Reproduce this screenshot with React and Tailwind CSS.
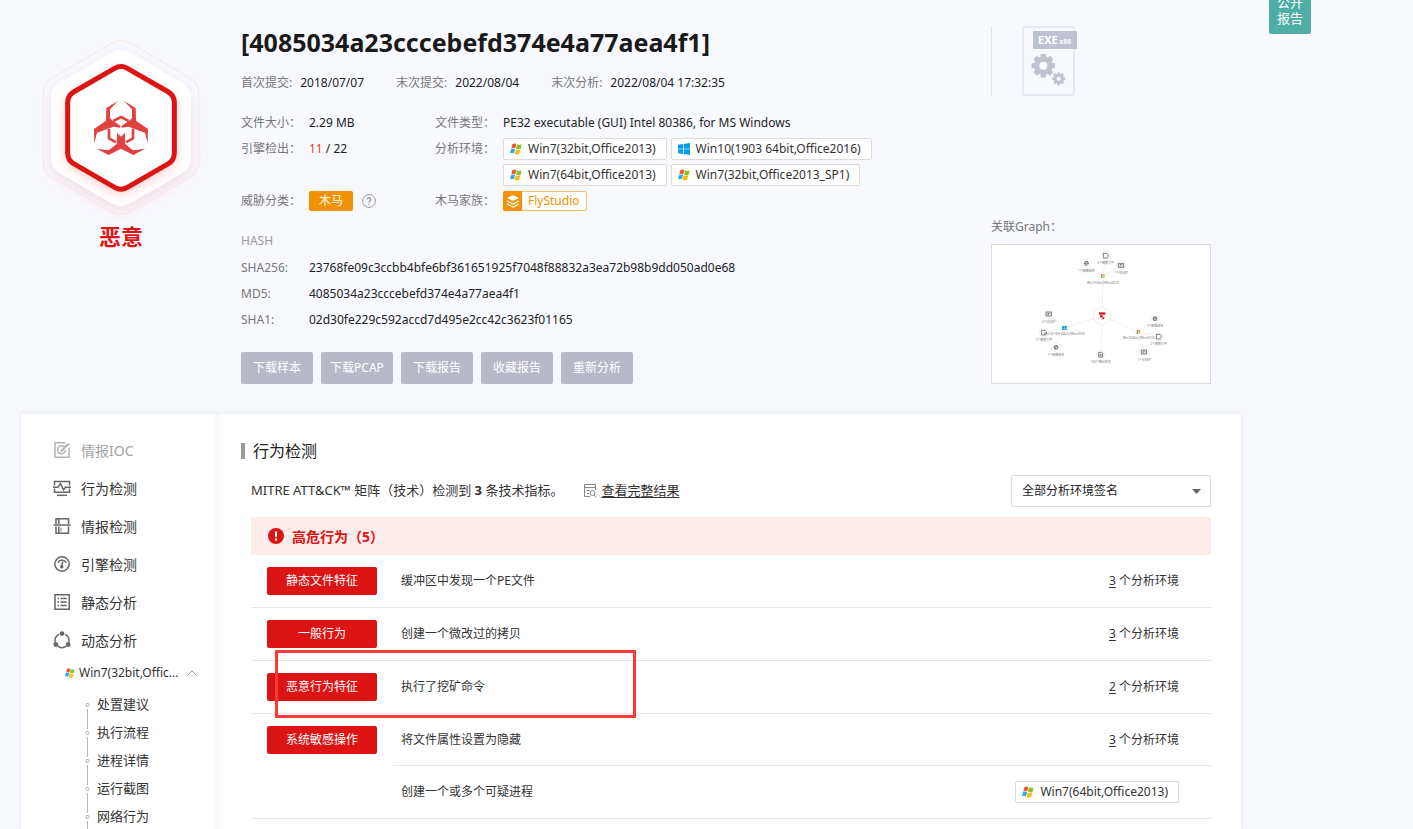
import React from 'react';

function hexPath(cx, top, bottom, half, r) {
  const rise = half * 0.577;
  const pts = [
    [cx, top],
    [cx + half, top + rise],
    [cx + half, bottom - rise],
    [cx, bottom],
    [cx - half, bottom - rise],
    [cx - half, top + rise],
  ];
  const toward = (a, b) => {
    const d = Math.hypot(b[0] - a[0], b[1] - a[1]);
    return [a[0] + ((b[0] - a[0]) * r) / d, a[1] + ((b[1] - a[1]) * r) / d];
  };
  return (
    pts
      .map((p, i) => {
        const before = toward(p, pts[(i + 5) % 6]);
        const after = toward(p, pts[(i + 1) % 6]);
        return `${i ? 'L' : 'M'}${before} Q${p} ${after}`;
      })
      .join(' ') + 'Z'
  );
}

function ThreatShield() {
  return (
    <svg viewBox="-27 0 600 570" className="block h-[190px] w-[200px]" aria-hidden="true">
      <defs>
        <filter id="soft" x="-30%" y="-30%" width="160%" height="160%">
          <feGaussianBlur stdDeviation="16" />
        </filter>
        <filter id="halo" x="-30%" y="-30%" width="160%" height="160%">
          <feGaussianBlur stdDeviation="20" />
        </filter>
        <linearGradient id="shade" x1="0" y1="0" x2="0" y2="1">
          <stop offset="0" stopColor="#e9e8f4" />
          <stop offset="1" stopColor="#f3d3db" />
        </linearGradient>
        <clipPath id="plate">
          <path d={hexPath(273, 52, 536, 210, 30)} />
        </clipPath>
      </defs>
      <path d={hexPath(273, 62, 550, 214, 36)} fill="url(#shade)" filter="url(#halo)" opacity="0.85" />
      <path d={hexPath(273, 24, 562, 233, 32)} fill="none" stroke="#fde3e1" strokeWidth="3" />
      <path d={hexPath(273, 52, 536, 210, 30)} fill="#fff" />
      <g clipPath="url(#plate)">
        <path d={hexPath(273, 112, 498, 166, 30)} fill="#f9b9b6" filter="url(#soft)" opacity="0.75" />
      </g>
      <path d={hexPath(273, 104, 483, 160, 22)} fill="#fff" stroke="#dc1414" strokeWidth="15" />
      <g fill="#e04242">
        <path d="M264 213L229 234L228 272L192 297L193 340L201 308L232 297L250 290L271 293L271 287L248 272L240 264L240 238Z" />
        <path d="M282 213L317 234L318 272L354 297L353 340L345 308L314 297L296 290L275 293L275 287L298 272L306 264L306 238Z" />
        <path d="M200 356L236 375L273 356L310 375L346 356L309 361L285 341L285 308L273 320L261 308L261 341L236 361Z" />
      </g>
      <path
        d="M250 273L273 261L296 273M237 297V325L258 337M309 297V325L288 337"
        fill="none"
        stroke="#e04242"
        strokeWidth="8"
      />
    </svg>
  );
}

function Win7Icon({ className = 'size-3' }) {
  return (
    <svg viewBox="0 0 36 36" className={`shrink-0 ${className}`} aria-hidden="true">
      <path d="M7 4Q12 0 19 3L16 16Q10 13 4 16Z" fill="#f0532d" />
      <path d="M21 4Q28 8 35 4L32 17Q25 20 18 17Z" fill="#8dc21f" />
      <path d="M3 18Q9 15 15 18L12 31Q6 28 0 31Z" fill="#28a9e8" />
      <path d="M17 20Q24 23 31 19L28 32Q21 36 14 33Z" fill="#fdb813" />
    </svg>
  );
}

function Win10Icon({ className = 'size-3' }) {
  return (
    <svg viewBox="0 0 36 36" className={`shrink-0 ${className}`} fill="#0a9fe5" aria-hidden="true">
      <path d="M0 5L15 3V17H0ZM17 2.700L36 0V17H17ZM0 19H15V33L0 31ZM17 19H36V36L17 33.300Z" />
    </svg>
  );
}

function EnvTag({ children, win10 = false }) {
  return (
    <span className="inline-flex h-[22px] items-center gap-[6px] rounded-[2px] border border-[#dcdcdc] bg-white pl-[6px] pr-[10px] text-[12px] text-[#333]">
      {win10 ? <Win10Icon /> : <Win7Icon />}
      {children}
    </span>
  );
}

function gearPath(cx, cy, outer, inner, teeth) {
  const out = [];
  for (let i = 0; i < teeth; i += 1) {
    const a = (i / teeth) * Math.PI * 2 - Math.PI / 2;
    [
      [-0.3, inner],
      [-0.2, outer],
      [0.2, outer],
      [0.3, inner],
    ].forEach(([o, r]) => out.push(`${cx + r * Math.cos(a + o)} ${cy + r * Math.sin(a + o)}`));
  }
  return `M${out.join('L')}Z`;
}

function ExeFile() {
  return (
    <svg viewBox="126 78 165 210" className="h-[70px] w-[55px]" role="img" aria-label="EXE x86">
      <rect x="129" y="81" width="153" height="204" rx="3" fill="#f8f9ff" stroke="#e6e8f1" strokeWidth="6" />
      <rect x="159" y="93" width="132" height="54" rx="3" fill="#bfc3d1" />
      <text x="174" y="132" fontSize="33" fontWeight="700" fill="#fff">
        EXE
      </text>
      <text x="238" y="132" fontSize="21" fontWeight="600" fill="#fff">
        x86
      </text>
      <path d={gearPath(190, 197, 36, 28, 8)} fill="#bfc3d1" />
      <circle cx="190" cy="197" r="12" fill="#f8f9ff" />
      <path d={gearPath(236, 236, 20, 15, 8)} fill="#bfc3d1" />
      <circle cx="236" cy="236" r="6" fill="#f8f9ff" />
    </svg>
  );
}

const graphLeaves = [
  { x: 319, y: 160, to: [369, 199], kind: 'globe', label: '1个网络域名' },
  { x: 377, y: 137, to: [369, 199], kind: 'file', label: '3个释放文件' },
  { x: 423, y: 166, to: [369, 199], kind: 'card', label: '1个访问IP' },
  { x: 206, y: 312, to: [253, 354], kind: 'card', label: '2个访问IP' },
  { x: 192, y: 368, to: [253, 354], kind: 'file', label: '2个释放文件' },
  { x: 228, y: 412, to: [253, 354], kind: 'globe', label: '1个网络域名' },
  { x: 525, y: 326, to: [476, 366], kind: 'globe', label: '1个网络域名' },
  { x: 536, y: 380, to: [476, 366], kind: 'file', label: '2个释放文件' },
  { x: 492, y: 426, to: [476, 366], kind: 'card', label: '1个访问IP' },
  { x: 362, y: 434, to: [366, 318], kind: 'doc', label: '100个相似样本' },
];

function LeafGlyph({ kind }) {
  if (kind === 'globe')
    return (
      <>
        <circle r="7" fill="#5d6570" />
        <path d="M-5 -2H5M-5 3H5M-2 -5L3 5" stroke="#fff" strokeWidth="1.500" />
      </>
    );
  if (kind === 'file')
    return <path d="M-7 -7H4L7 -4V4M3 7H-7V-7M2 5L7 8" fill="none" stroke="#5d6570" strokeWidth="2.500" />;
  if (kind === 'card')
    return <path d="M-8 -6H8V6H-8ZM-4 -2H4M-4 2H1M4 2H5" fill="none" stroke="#5d6570" strokeWidth="2.500" />;
  return <path d="M-6 -7H3L6 -4V7H-6ZM-3 -1H3M-3 3H3" fill="none" stroke="#5d6570" strokeWidth="2.500" />;
}

function RelationGraph() {
  return (
    <svg viewBox="36 105 654 414" className="block h-[138px] w-full" role="img" aria-label="关联关系图">
      <path d="M369 199L366 318L253 354M366 318L476 366" fill="none" stroke="#e8e8ea" strokeWidth="2" />
      {graphLeaves.map((n, i) => (
        <line key={i} x1={n.x} y1={n.y} x2={n.to[0]} y2={n.to[1]} stroke="#e8e8ea" strokeWidth="2" />
      ))}
      {graphLeaves.map((n, i) => (
        <g key={i} transform={`translate(${n.x} ${n.y})`}>
          <circle r="14" fill="#fff" stroke="#ececee" strokeWidth="2" />
          <LeafGlyph kind={n.kind} />
          <text y="26" textAnchor="middle" fontSize="9" fill="#777">
            {n.label}
          </text>
        </g>
      ))}
      {[
        [369, 199, 'Win7(32bit,Office2013)'],
        [476, 366, 'Win7(64bit,Office2013)'],
        [253, 354, 'Win10(1903 64bit,Office2016)'],
      ].map(([x, y, label], i) => (
        <g key={label} transform={`translate(${x} ${y})`}>
          <circle r="12" fill="#fff" stroke="#f1f1f3" strokeWidth="2" />
          {i === 2 ? (
            <path d="M-7 -5L-1 -6V0H-7ZM0 -6L7 -7V0H0ZM-7 1H-1V6L-7 5ZM0 1H7V7L0 6Z" fill="#0a9fe5" />
          ) : (
            <>
              <path d="M-5 -6H0L-1 -1H-6Z" fill="#f0532d" />
              <path d="M1 -5H6L5 0H0Z" fill="#8dc21f" />
              <path d="M-6 0H-1L-2 5H-7Z" fill="#28a9e8" />
              <path d="M0 1H5L4 6H-1Z" fill="#fdb813" />
            </>
          )}
          <text y="22" textAnchor="middle" fontSize="9" fill="#777">
            {label}
          </text>
        </g>
      ))}
      <path d={hexPath(366, 290, 346, 25, 3)} fill="#fff" stroke="#fbd5d3" strokeWidth="2" />
      <path d="M357 307H376V314H357Z" fill="#dc1414" />
      <path d="M357 316H376V330H357Z" fill="#fdeceb" />
      <circle cx="364" cy="319" r="4" fill="#dc1414" />
      <circle cx="370" cy="325" r="3" fill="#dc1414" />
    </svg>
  );
}

function NavIcon({ name }) {
  const shapes = {
    ioc: (
      <>
        <path d="M12 1.800H2V16.300H16V7" />
        <path d="M11 5.500A4 4 0 1 0 12.600 9" />
        <path d="M8 10.500L14.500 3.500" strokeWidth="2.200" />
        <path d="M13 5.500L16.500 2.500" />
      </>
    ),
    behavior: (
      <>
        <path d="M1.500 6.500V2.500H16.500V6.500M1.500 9.500V13.300H16.500V9.500" />
        <path d="M0 8.300H5L7.500 4.500L10.500 10.800L12.500 8.300H18" />
        <path d="M4 16.300H14" />
      </>
    ),
    intel: (
      <>
        <path d="M3 7V1.800H15.500V7M3 9.500V16.300H15.500V9.500M5.800 1.800V7M5.800 9.500V16.300" />
        <path d="M0.500 8H17.500" />
        <path d="M8 10.500V14.500" strokeWidth="0.800" />
      </>
    ),
    engine: (
      <>
        <circle cx="9" cy="9" r="7.200" />
        <path d="M4.800 8A4.500 4.500 0 0 1 13.200 8" strokeWidth="1.200" />
        <path d="M9.700 6.500L8.800 11.500" />
        <circle cx="8.700" cy="11.800" r="1" fill="currentColor" />
      </>
    ),
    static: (
      <>
        <path d="M2 1.800H16.200V16.300H2Z" />
        <path d="M4.500 5.500H6M4.500 9H6M4.500 12.500H6M7.500 5.500H13.700M7.500 9H13.700M7.500 12.500H13.700" />
      </>
    ),
    dynamic: (
      <>
        <path d="M6 3.300A7 7 0 0 0 2.200 11M12 3.300A7 7 0 0 1 15.800 11M4.800 15.200A7 7 0 0 0 13.200 15.200" />
        <circle cx="9" cy="2.600" r="1.700" fill="currentColor" />
        <circle cx="2.800" cy="13.500" r="1.700" fill="currentColor" />
        <circle cx="15.200" cy="13.500" r="1.700" fill="currentColor" />
      </>
    ),
  };
  return (
    <svg viewBox="0 0 18 18" className="size-[18px] shrink-0" fill="none" stroke="currentColor" strokeWidth="1.500" aria-hidden="true">
      {shapes[name]}
    </svg>
  );
}

const navItems = [
  ['ioc', '情报IOC'],
  ['behavior', '行为检测'],
  ['intel', '情报检测'],
  ['engine', '引擎检测'],
  ['static', '静态分析'],
  ['dynamic', '动态分析'],
];

const subItems = ['处置建议', '执行流程', '进程详情', '运行截图', '网络行为', '释放文件'];

function Sidebar() {
  return (
    <nav className="w-[194px] shrink-0 overflow-hidden bg-white pt-[17px]">
      <ul>
        {navItems.map(([icon, label], i) => (
          <li key={label}>
            <a href={`#${icon}`} className={`flex h-[38px] items-center gap-[10px] pl-8 text-[14px] ${i ? 'text-[#333]' : 'text-[#a3a3a3]'}`}>
              <span className={i ? 'text-[#666]' : 'text-[#b3b3b3]'}>
                <NavIcon name={icon} />
              </span>
              {label}
            </a>
          </li>
        ))}
      </ul>
      <button type="button" className="mb-1 flex h-7 items-center gap-1 pl-11 text-[12px] text-[#333]">
        <Win7Icon className="size-[10px]" />
        <span className="w-[104px] text-left">Win7(32bit,Offic...</span>
        <svg viewBox="0 0 10 6" className="h-[6px] w-[10px]" fill="none" stroke="#999" aria-hidden="true">
          <path d="M0.500 5.500L5 1L9.500 5.500" />
        </svg>
      </button>
      <ul>
        {subItems.map((label) => (
          <li key={label} className="flex h-7 pl-16">
            <svg viewBox="0 0 5 28" className="mr-[7px] h-7 w-[5px] shrink-0" fill="none" stroke="#b5b5b5" aria-hidden="true">
              <rect x="1" y="12.500" width="3" height="3" rx="1" />
              <path d="M2.500 0V10" className={label === subItems[0] ? 'hidden' : ''} />
              <path d="M2.500 18V28" />
            </svg>
            <a href={`#${label}`} className="flex items-center text-[13px] text-[#333]">
              {label}
            </a>
          </li>
        ))}
      </ul>
    </nav>
  );
}

const label = 'text-[#777]';

function Summary() {
  return (
    <div className="min-w-0 flex-1 pl-5 pt-[26px] text-[12px] leading-[26px] text-[#222]">
      <h1 className="text-[25px] font-bold leading-8 text-[#1a1a1a]">[4085034a23cccebefd374e4a77aea4f1]</h1>
      <div className="mt-3 flex gap-8">
        {[
          ['首次提交:', '2018/07/07'],
          ['末次提交:', '2022/08/04'],
          ['末次分析:', '2022/08/04 17:32:35'],
        ].map(([k, v]) => (
          <div key={k} className="flex gap-2">
            <span className={label}>{k}</span>
            <span>{v}</span>
          </div>
        ))}
      </div>
      <div className="mt-[14px] grid grid-cols-[68px_126px_68px_1fr]">
        <span className={label}>文件大小：</span>
        <span>2.29 MB</span>
        <span className={label}>文件类型：</span>
        <span>PE32 executable (GUI) Intel 80386, for MS Windows</span>
        <span className={label}>引擎检出：</span>
        <span>
          <span className="text-[#d8471f]">11</span> / 22
        </span>
        <span className={label}>分析环境：</span>
        <div className="flex flex-col items-start">
          <div className="flex h-[26px] items-center gap-1">
            <EnvTag>Win7(32bit,Office2013)</EnvTag>
            <EnvTag win10>Win10(1903 64bit,Office2016)</EnvTag>
          </div>
          <div className="flex h-[26px] items-center gap-1">
            <EnvTag>Win7(64bit,Office2013)</EnvTag>
            <EnvTag>Win7(32bit,Office2013_SP1)</EnvTag>
          </div>
        </div>
        <span className={label}>威胁分类：</span>
        <span className="flex items-center gap-[9px]">
          <span className="flex h-5 w-11 items-center justify-center rounded-[2px] bg-[#f39200] text-white">木马</span>
          <svg viewBox="0 0 14 14" className="size-[14px]" fill="none" stroke="#999" aria-hidden="true">
            <circle cx="7" cy="7" r="6.400" />
            <path d="M5.200 5.600A1.800 1.800 0 1 1 7.700 7.200Q7 7.500 7 8.400M7 9.700V10.900" strokeWidth="1.300" />
          </svg>
        </span>
        <span className={label}>木马家族：</span>
        <span className="flex items-center">
          <span className="flex h-5 items-center rounded-[2px] border border-[#f8c26d] bg-white text-[#f39200]">
            <span className="-my-px -ml-px flex h-5 w-[19px] items-center justify-center rounded-l-[2px] bg-[#f39200]">
              <svg viewBox="0 0 14 14" className="size-[14px]" aria-hidden="true">
                <path d="M7 1L13 4L7 7L1 4Z" fill="#fff" />
                <path d="M1 7L7 10L13 7M1 10L7 13L13 10" fill="none" stroke="#fff" strokeWidth="1.300" />
              </svg>
            </span>
            <span className="px-[6px]">FlyStudio</span>
          </span>
        </span>
      </div>
      <div className="mt-[14px] text-[#999]">HASH</div>
      <dl className="mt-px grid grid-cols-[68px_1fr]">
        <dt className={label}>SHA256:</dt>
        <dd>23768fe09c3ccbb4bfe6bf361651925f7048f88832a3ea72b98b9dd050ad0e68</dd>
        <dt className={label}>MD5:</dt>
        <dd>4085034a23cccebefd374e4a77aea4f1</dd>
        <dt className={label}>SHA1:</dt>
        <dd>02d30fe229c592accd7d495e2cc42c3623f01165</dd>
      </dl>
      <div className="mt-[19px] flex gap-2">
        {['下载样本', '下载PCAP', '下载报告', '收藏报告', '重新分析'].map((t) => (
          <button key={t} type="button" className="h-8 w-[72px] rounded-[2px] bg-[#b8b9c7] text-center text-white">
            {t}
          </button>
        ))}
      </div>
    </div>
  );
}

function TypeBadge({ children }) {
  return <span className="flex h-7 w-[110px] items-center justify-center rounded-[2px] bg-[#dc1414] text-white">{children}</span>;
}

function Count({ n }) {
  return (
    <span>
      <a href="#env" className="underline underline-offset-2">
        {n}
      </a>{' '}
      个分析环境
    </span>
  );
}

const rows = [
  { type: '静态文件特征', text: '缓冲区中发现一个PE文件', n: 3 },
  { type: '一般行为', text: '创建一个微改过的拷贝', n: 3 },
  { type: '恶意行为特征', text: '执行了挖矿命令', n: 2, marked: true },
];

function Detection() {
  return (
    <main className="min-w-0 flex-1 overflow-hidden bg-white pl-5 pr-[30px] pt-[22px]">
      <h2 className="flex h-[30px] items-center gap-2 text-[16px] text-[#222]">
        <span className="h-4 w-1 bg-[#999]" />
        行为检测
      </h2>
      <div className="ml-[10px]">
        <div className="mt-[9px] flex h-8 items-center text-[13px] text-[#333]">
          <p>
            MITRE ATT&amp;CK™ 矩阵（技术）检测到 <b>3</b> 条技术指标。
          </p>
          <svg viewBox="0 0 14 14" className="ml-5 size-[14px]" fill="none" stroke="#888" aria-hidden="true">
            <path d="M12.500 6V0.500H1.500V12.500H7M1.500 3.500H12.500M4 6.500H7M4 9.500H6" />
            <circle cx="9.500" cy="9" r="2.500" />
            <path d="M11.300 11L13 13.200" />
          </svg>
          <a href="#attck" className="ml-1 underline underline-offset-2">
            查看完整结果
          </a>
          <div className="relative ml-auto">
            <select
              aria-label="分析环境签名"
              className="block h-8 w-[200px] appearance-none rounded-[2px] border border-[#dcdcdc] bg-white pl-[10px] pr-6 text-[12px] text-[#222]"
            >
              <option>全部分析环境签名</option>
            </select>
            <svg viewBox="0 0 9 5" className="pointer-events-none absolute right-[10px] top-[14px] h-[5px] w-[9px]" aria-hidden="true">
              <path d="M0 0H9L4.500 5Z" fill="#666" />
            </svg>
          </div>
        </div>
        <h3 className="mt-[10px] flex h-[38px] items-center gap-2 bg-[#fcecea] pl-[17px] text-[14px] font-bold text-[#dc1414]">
          <svg viewBox="0 0 16 16" className="size-4" aria-hidden="true">
            <circle cx="8" cy="8" r="8" fill="#dc1414" />
            <path d="M8 3.500V9M8 10.500V12.500" stroke="#fff" strokeWidth="2" />
          </svg>
          高危行为（5）
        </h3>
        <table className="w-full border-separate border-spacing-0 text-[12px] text-[#333]">
          <tbody>
            {rows.map((r) => (
              <tr key={r.type} className="h-[53px]">
                <td className="relative w-[142px] border-b border-[#e6e6e6] pl-4">
                  <TypeBadge>{r.type}</TypeBadge>
                  {r.marked && (
                    <div className="pointer-events-none absolute -top-[11px] left-6 z-10 h-[68px] w-[361px] border-3 border-[#fb3838]" />
                  )}
                </td>
                <td className="border-b border-[#e6e6e6] pl-2">{r.text}</td>
                <td className="border-b border-[#e6e6e6] pr-8 text-right">
                  <Count n={r.n} />
                </td>
              </tr>
            ))}
            <tr className="h-[52px]">
              <td rowSpan={2} className="border-b border-[#e6e6e6] pl-4 pt-3 align-top">
                <TypeBadge>系统敏感操作</TypeBadge>
              </td>
              <td className="border-b border-[#e6e6e6] pl-2">将文件属性设置为隐藏</td>
              <td className="border-b border-[#e6e6e6] pr-8 text-right">
                <Count n={3} />
              </td>
            </tr>
            <tr className="h-[53px]">
              <td className="border-b border-[#e6e6e6] pl-2">创建一个或多个可疑进程</td>
              <td className="border-b border-[#e6e6e6] pr-8 text-right">
                <EnvTag>Win7(64bit,Office2013)</EnvTag>
              </td>
            </tr>
          </tbody>
        </table>
      </div>
    </main>
  );
}

export default function App() {
  return (
    <div className="flex h-screen items-start overflow-hidden bg-[#f8f9ff] pl-[21px] font-['Noto_Sans','Noto_Sans_CJK_SC',sans-serif]">
      <div className="flex h-full min-w-0 max-w-[1220px] flex-1 flex-col">
        <header className="flex shrink-0 pb-[30px]">
          <div className="w-[200px] shrink-0 pt-[30px] text-center">
            <ThreatShield />
            <div className="text-[22px] font-bold leading-8 text-[#dc1414]">恶意</div>
          </div>
          <Summary />
          <div className="mr-[30px] flex w-[220px] shrink-0 flex-col justify-between pt-[26px]">
            <div className="h-[70px] border-l border-[#e0e2ea] pl-[30px]">
              <ExeFile />
            </div>
            <div>
              <div className="text-[12px] leading-[26px] text-[#777]">关联Graph：</div>
              <div className="mt-1 border border-[#dcdcdc] bg-white">
                <RelationGraph />
              </div>
            </div>
          </div>
        </header>
        <div className="flex min-h-0 flex-1 gap-[6px] shadow-[0_0_4px_rgba(60,70,110,0.12)]">
          <Sidebar />
          <Detection />
        </div>
      </div>
      <div className="-mt-[14px] ml-7 w-[42px] shrink-0 rounded-b-[2px] bg-[#4dada7] px-2 py-2 text-[13px] leading-4 text-white">
        公开报告
      </div>
    </div>
  );
}
